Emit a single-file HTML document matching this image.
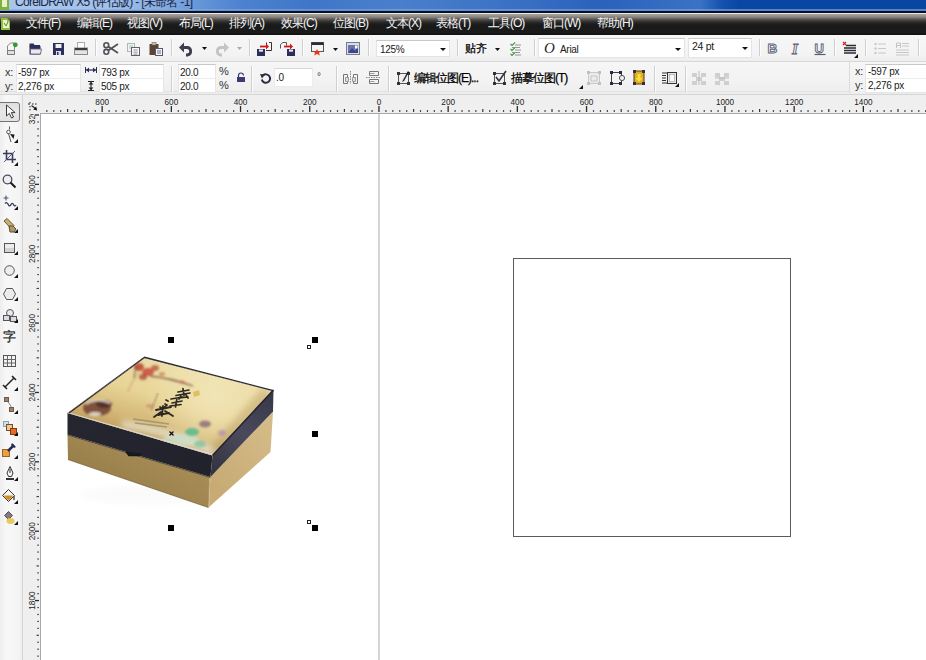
<!DOCTYPE html>
<html><head><meta charset="utf-8"><style>
*{margin:0;padding:0;box-sizing:border-box}
html,body{width:926px;height:660px;overflow:hidden;background:#fff;font-family:"Liberation Sans",sans-serif;}
.a{position:absolute}
#title{left:0;top:0;width:926px;height:11px;background:linear-gradient(90deg,#aac6ea 0px,#a4c0e8 110px,#8aaee0 160px,#6898d8 195px,#4c82d0 240px,#3f76c8 310px,#4a7fcc 400px,#3a70c4 520px,#2a62bc 600px,#3a72c6 700px,#1452ae 722px,#0a46a4 740px,#0846a2 926px);overflow:hidden}
#title .tl{position:absolute;left:0;top:9px;width:926px;height:2px;background:linear-gradient(180deg,rgba(150,190,240,.5),rgba(90,140,210,.9))}
#title .t{position:absolute;left:15px;top:-4px;font-size:12px;line-height:13px;letter-spacing:-0.7px;color:#15284a;white-space:nowrap}
#menu{left:0;top:11px;width:926px;height:24px;background:linear-gradient(180deg,#0a1020 0,#0a1020 2px,#eeeeee 2px,#e6e6e6 3px,#aaa49e 3px,#a29c96 4px,#8a8580 6px,#5e5a56 8px,#3a3836 10px,#242424 12px,#1a1a1a 14px,#1a1a1a 22px,#121212 23px,#121212 24px)}
.mi{position:absolute;top:6px;color:#f4f4f4;font-size:12px;white-space:nowrap;line-height:13px;letter-spacing:-1px}
#tb1{left:0;top:35px;width:926px;height:26px;background:linear-gradient(180deg,#f8f8f8 0,#f6f6f6 2px,#f3f3f3 20px,#ededed 26px)}
#tb1line{left:0;top:61px;width:926px;height:1px;background:#d8d8d8}
#tb2{left:0;top:62px;width:926px;height:33px;background:linear-gradient(180deg,#f6f6f6 0,#f2f2f2 20px,#eeeeee 29px,#ececec 32px,#d6d6d6 32px,#d6d6d6 33px)}
#toolbox{left:0;top:95px;width:22px;height:565px;background:linear-gradient(90deg,#eeeeee 0,#f7f7f7 6px,#f5f5f5 18px,#eeeeee 22px)}
#tbsep{left:22px;top:95px;width:1px;height:565px;background:#d4d4d4}
#canvas{left:41px;top:113px;width:885px;height:547px;background:#fff}
#vline{left:378px;top:114px;width:2px;height:546px;background:#d4d4d4}
#rect{left:513px;top:258px;width:278px;height:279px;border:1px solid #5a5a5a}
.sep{position:absolute;width:2px;border-left:1px solid #cfcfcf;border-right:1px solid #fdfdfd}
.inp{position:absolute;background:#fff;border:1px solid #e4e4e4;border-top-color:#c8c8c8}
.txt{position:absolute;font-size:10px;color:#202020;white-space:nowrap;line-height:11px;letter-spacing:-0.3px}
.cn{position:absolute;font-size:12px;color:#000;white-space:nowrap;line-height:13px;letter-spacing:-1px;-webkit-text-stroke:0.25px #000}
.h{position:absolute;width:6px;height:6px;background:#000}
.ho{position:absolute;width:4px;height:4px;border:1px solid #222;background:#fff}
svg{position:absolute;overflow:visible}
</style></head><body>
<div class="a" id="title"><div class="tl"></div><div class="t">CorelDRAW X5 (评估版) - [未命名 -1]</div><svg style="left:0;top:0" width="10" height="11"><rect x="0" y="-2" width="9" height="12" fill="#7fb238"/><rect x="2" y="-2" width="5" height="9" fill="#e8f0d0"/></svg></div>
<div class="a" id="menu">
<svg style="left:1px;top:6px" width="10" height="14"><path d="M0 1h6l3 3v9H0z" fill="#8cc23c"/><path d="M2 3h4v2h2v6H2z" fill="#eaf4d4"/><path d="M3 6l2 3l2-4" stroke="#5a8a20" stroke-width="1" fill="none"/></svg>
<span class="mi" style="left:26px">文件(F)</span>
<span class="mi" style="left:77px">编辑(E)</span>
<span class="mi" style="left:127px">视图(V)</span>
<span class="mi" style="left:179px">布局(L)</span>
<span class="mi" style="left:229px">排列(A)</span>
<span class="mi" style="left:281px">效果(C)</span>
<span class="mi" style="left:333px">位图(B)</span>
<span class="mi" style="left:386px">文本(X)</span>
<span class="mi" style="left:436px">表格(T)</span>
<span class="mi" style="left:488px">工具(O)</span>
<span class="mi" style="left:542px">窗口(W)</span>
<span class="mi" style="left:597px">帮助(H)</span>
</div>
<div class="a" id="tb1"></div><div class="a" id="tb1line"></div><div class="a" id="tb2"></div><div class="a" style="left:0;top:91px;width:926px;height:1px;background:#e2e2e2"></div>
<div class="sep" style="left:95px;top:39px;height:17px"></div>
<div class="sep" style="left:171px;top:39px;height:17px"></div>
<div class="sep" style="left:249px;top:39px;height:17px"></div>
<div class="sep" style="left:302px;top:39px;height:17px"></div>
<div class="sep" style="left:368px;top:39px;height:17px"></div>
<div class="sep" style="left:457px;top:39px;height:17px"></div>
<div class="sep" style="left:534px;top:39px;height:17px"></div>
<div class="sep" style="left:759px;top:39px;height:17px"></div>
<div class="sep" style="left:834px;top:39px;height:17px"></div>
<div class="sep" style="left:865px;top:39px;height:17px"></div>
<div class="sep" style="left:918px;top:39px;height:17px"></div>
<div class="sep" style="left:171px;top:66px;height:26px"></div>
<div class="sep" style="left:251px;top:66px;height:26px"></div>
<div class="sep" style="left:336px;top:66px;height:26px"></div>
<div class="sep" style="left:388px;top:66px;height:26px"></div>
<div class="sep" style="left:654px;top:66px;height:26px"></div>
<div class="sep" style="left:685px;top:66px;height:26px"></div>
<svg style="left:6px;top:41px" width="12" height="14" viewBox="0 0 12 14"><path d="M1.5 5L4.5 2H8.5V13.5H1.5Z" fill="#f6f6f6" stroke="#8a8a8a"/><path d="M1.5 9.5h7v4h-7z" fill="#e0e0e0" stroke="#7a7a7a"/><circle cx="9.3" cy="3.8" r="2.4" fill="#2f9a2f"/></svg>
<svg style="left:29px;top:43px" width="13" height="12" viewBox="0 0 13 12"><path d="M0.5 0.5h4l1 1.5h5.5v2H0.5z" fill="#2c2f5a"/><path d="M0.5 3h11v8.5H0.5z" fill="#2c2f5a"/><path d="M1.5 6h11l-1 5H1.5z" fill="#e8e8ee" stroke="#5a5a7a" stroke-width="0.8"/></svg>
<svg style="left:53px;top:43px" width="11" height="12" viewBox="0 0 11 12"><rect x="0" y="0" width="11" height="12" fill="#2c2f5a"/><rect x="2.5" y="1" width="6" height="4" fill="#f0f0f0"/><rect x="3" y="8" width="5" height="4" fill="#dde"/><rect x="4" y="9" width="1.5" height="3" fill="#2c2f5a"/></svg>
<svg style="left:74px;top:42px" width="14" height="13" viewBox="0 0 14 13"><rect x="3.5" y="0.5" width="7" height="6" fill="#fff" stroke="#aaa"/><rect x="0.5" y="6" width="13" height="6.5" fill="#e4e4e4" stroke="#8a8a8a"/><rect x="1" y="6" width="12" height="2.2" fill="#3a3a44"/></svg>
<svg style="left:103px;top:42px" width="16" height="13" viewBox="0 0 16 13"><circle cx="3.3" cy="3.2" r="2.4" fill="none" stroke="#505058" stroke-width="1.6"/><circle cx="3.3" cy="9.8" r="2.4" fill="none" stroke="#505058" stroke-width="1.6"/><path d="M5.2 4.5L15 11M5.2 8.5L15 2" stroke="#505058" stroke-width="1.7"/></svg>
<svg style="left:127px;top:43px" width="13" height="13" viewBox="0 0 13 13"><rect x="0.5" y="0.5" width="7" height="8" fill="#f0f4f4" stroke="#a8b8b8"/><path d="M2 3h4M2 5h4" stroke="#9ab8b0" stroke-width="0.8"/><rect x="4.5" y="4.5" width="8" height="8" fill="#f8f8f8" stroke="#606068"/><path d="M6.5 7h4M6.5 9.2h4M6.5 11.2h4" stroke="#7a7a84" stroke-width="0.8"/></svg>
<svg style="left:149px;top:42px" width="14" height="14" viewBox="0 0 14 14"><rect x="0.5" y="2" width="9" height="11" fill="#5a4630"/><rect x="3" y="0.5" width="4" height="2.5" fill="#c8c8c8" stroke="#666" stroke-width="0.6"/><rect x="6.5" y="6.5" width="7" height="7" fill="#f4f4f8" stroke="#555a66"/><path d="M8 9h4M8 11h4" stroke="#6a7090"/></svg>
<svg style="left:179px;top:42px" width="14" height="13" viewBox="0 0 14 13"><path d="M2 5.5h6.5a3.8 3.8 0 0 1 0 7.5H7" fill="none" stroke="#3c3e4e" stroke-width="2.8"/><path d="M0 5.5L5 0.5V10.5Z" fill="#3c3e4e"/></svg>
<svg style="left:202px;top:47px" width="5" height="3" viewBox="0 0 5 3"><path d="M0 0h5l-2.5 3z" fill="#111"/></svg>
<svg style="left:215px;top:42px" width="14" height="13" viewBox="0 0 14 13"><path d="M12 5.5H5.5a3.8 3.8 0 0 0 0 7.5H7" fill="none" stroke="#c4c4c8" stroke-width="2.8"/><path d="M14 5.5L9 0.5V10.5Z" fill="#c4c4c8"/></svg>
<svg style="left:237px;top:47px" width="5" height="3" viewBox="0 0 5 3"><path d="M0 0h5l-2.5 3z" fill="#aaa"/></svg>
<svg style="left:257px;top:42px" width="15" height="14" viewBox="0 0 15 14"><path d="M9.5 3.5V0.5M12 0.5h2.5v8H9" fill="none" stroke="#333"/><path d="M3 4.5h7" stroke="#d01818" stroke-width="1.8"/><path d="M9 1.5l3 3-3 3z" fill="#d01818"/><rect x="0" y="7" width="8" height="7" fill="#2c2f5a"/><rect x="2" y="7.5" width="4" height="2.2" fill="#e8e8f0"/></svg>
<svg style="left:280px;top:42px" width="15" height="14" viewBox="0 0 15 14"><path d="M0.5 6.5V2.5L3 0.5h3.5v3" fill="#fafafa" stroke="#555"/><path d="M4 4.5h7" stroke="#d01818" stroke-width="1.8"/><path d="M10 1.5l3 3-3 3z" fill="#d01818"/><rect x="7" y="7" width="8" height="7" fill="#2c2f5a"/><rect x="9" y="7.5" width="4" height="2.2" fill="#e8e8f0"/></svg>
<svg style="left:311px;top:42px" width="13" height="13" viewBox="0 0 13 13"><rect x="0.5" y="0.5" width="12" height="9" fill="#f4f4f4" stroke="#555"/><rect x="0.5" y="0.5" width="12" height="2.5" fill="#2a2a3a"/><path d="M6 7l1.3 2.5L10 9 8 11l1 2.5-3-1.5-3 1.5 1-2.5-2-2 2.7.5z" fill="#e83a1a"/></svg>
<svg style="left:333px;top:48px" width="5" height="3" viewBox="0 0 5 3"><path d="M0 0h5l-2.5 3z" fill="#111"/></svg>
<svg style="left:346px;top:42px" width="14" height="13" viewBox="0 0 14 13"><rect x="0.5" y="0.5" width="13" height="12" fill="#dcdce4" stroke="#7a7a8a"/><rect x="2" y="3" width="10" height="8" fill="#6a74b0"/><path d="M2 11l4-5 3 3 3-4v6z" fill="#3a4488"/><rect x="9" y="3.5" width="2.5" height="3" fill="#fff"/></svg>
<div class="inp" style="left:376px;top:40px;width:74px;height:17px"></div>
<div class="txt" style="left:380px;top:44px">125%</div>
<svg style="left:440px;top:48px" width="6" height="3" viewBox="0 0 6 3"><path d="M0 0h6l-3 3z" fill="#111"/></svg>
<div class="cn" style="left:465px;top:42px;font-size:11px;letter-spacing:-0.5px">贴齐</div>
<svg style="left:495px;top:48px" width="5" height="3" viewBox="0 0 5 3"><path d="M0 0h5l-2.5 3z" fill="#111"/></svg>
<svg style="left:510px;top:42px" width="11" height="14" viewBox="0 0 11 14"><path d="M0.5 2l1.5 1.5 3-3M0.5 7l1.5 1.5 3-3M0.5 12l1.5 1.5 3-3" fill="none" stroke="#3a9a3a" stroke-width="1.1"/><path d="M5 3h6M5 8h6M5 13h6M2 5.5h8M2 10.5h8" stroke="#8a8a8a" stroke-width="0.9"/></svg>
<div class="inp" style="left:538px;top:38px;width:147px;height:20px"></div>
<div class="a" style="left:544px;top:41px;font-family:'Liberation Serif',serif;font-style:italic;font-weight:normal;font-size:15px;line-height:15px;color:#1a2a2a">O</div>
<div class="txt" style="left:560px;top:44px;font-size:10px">Arial</div>
<svg style="left:675px;top:48px" width="6" height="3" viewBox="0 0 6 3"><path d="M0 0h6l-3 3z" fill="#111"/></svg>
<div class="inp" style="left:688px;top:38px;width:64px;height:20px"></div>
<div class="txt" style="left:692px;top:41px;font-size:10.5px">24 pt</div>
<svg style="left:742px;top:47px" width="6" height="3" viewBox="0 0 6 3"><path d="M0 0h6l-3 3z" fill="#111"/></svg>
<svg style="left:766px;top:41px" width="14" height="14" viewBox="0 0 14 14"><text x="1.5" y="12.3" font-family="Liberation Sans" font-weight="bold" font-size="13.5" fill="#fafafa" stroke="#5a5d72" stroke-width="0.9">B</text></svg>
<svg style="left:789px;top:41px" width="14" height="14" viewBox="0 0 14 14"><text x="3" y="12.5" font-family="Liberation Serif" font-style="italic" font-weight="bold" font-size="15" fill="#fafafa" stroke="#5a5d72" stroke-width="0.9">I</text></svg>
<svg style="left:813px;top:41px" width="14" height="15" viewBox="0 0 14 15"><text x="1.5" y="11.5" font-family="Liberation Sans" font-weight="bold" font-size="13" fill="#fafafa" stroke="#5a5d72" stroke-width="0.9">U</text><path d="M1.5 13.5h11" stroke="#5a5d72" stroke-width="1.2"/></svg>
<svg style="left:842px;top:41px" width="17" height="17" viewBox="0 0 17 17"><path d="M1 1l3 3M4 1l-3 3" stroke="#d82020" stroke-width="1.2"/><path d="M4 4.5h10M2 7h12M2 9.5h12M2 12h12" stroke="#2a2a34" stroke-width="1.3"/><path d="M16 13v4h-4z" fill="#111"/></svg>
<svg style="left:874px;top:42px" width="12" height="13" viewBox="0 0 12 13"><circle cx="1.5" cy="2" r="1.2" fill="#c8c8c8"/><circle cx="1.5" cy="6.5" r="1.2" fill="#c8c8c8"/><circle cx="1.5" cy="11" r="1.2" fill="#c8c8c8"/><path d="M4 2h8M4 6.5h8M4 11h8" stroke="#c8c8c8" stroke-width="1.2"/></svg>
<svg style="left:896px;top:42px" width="13" height="13" viewBox="0 0 13 13"><path d="M0.5 6V1h4v5M0.5 3.5h4" stroke="#c4c4c4" fill="none"/><path d="M6 1.5h7M6 4h7M0 8h13M0 10.5h13M0 13h13" stroke="#c8c8c8" stroke-width="1.1"/></svg>
<div class="txt" style="left:5px;top:67px;font-size:11px;color:#333">x:</div>
<div class="txt" style="left:5px;top:81px;font-size:11px;color:#333">y:</div>
<div class="inp" style="left:16px;top:64px;width:65px;height:29px;border-color:#e6e6e6;border-top-color:#c8c8c8"></div>
<div class="a" style="left:17px;top:78px;width:63px;height:1px;background:#ececec"></div>
<div class="txt" style="left:18px;top:67px">-597 px</div>
<div class="txt" style="left:18px;top:81px">2,276 px</div>
<svg style="left:85px;top:67px" width="12" height="6" viewBox="0 0 12 6"><path d="M0.5 0v6M11.5 0v6" stroke="#2c2f5a"/><path d="M1 3h10" stroke="#2c2f5a" stroke-width="1.2"/><path d="M1 3l3-2.5v5zM11 3l-3-2.5v5z" fill="#2c2f5a"/></svg>
<svg style="left:88px;top:81px" width="6" height="10" viewBox="0 0 6 10"><path d="M0 0.5h6M0 9.5h6" stroke="#222"/><path d="M3 1v8" stroke="#222" stroke-width="1.1"/><path d="M3 1L0.5 3.5h5zM3 9L0.5 6.5h5z" fill="#222"/></svg>
<div class="inp" style="left:99px;top:64px;width:65px;height:29px;border-color:#e6e6e6;border-top-color:#c8c8c8"></div>
<div class="a" style="left:100px;top:78px;width:63px;height:1px;background:#ececec"></div>
<div class="txt" style="left:101px;top:67px">793 px</div>
<div class="txt" style="left:101px;top:81px">505 px</div>
<div class="inp" style="left:178px;top:64px;width:38px;height:29px;border-color:#e6e6e6;border-top-color:#c8c8c8"></div>
<div class="a" style="left:179px;top:78px;width:36px;height:1px;background:#ececec"></div>
<div class="txt" style="left:180px;top:67px">20.0</div>
<div class="txt" style="left:180px;top:81px">20.0</div>
<div class="txt" style="left:219px;top:66px;font-size:11px;color:#333">%</div>
<div class="txt" style="left:219px;top:80px;font-size:11px;color:#333">%</div>
<svg style="left:237px;top:73px" width="8" height="9" viewBox="0 0 8 9"><path d="M1.5 4V2.5a2.5 2.5 0 0 1 5 0" fill="none" stroke="#3a3a6a" stroke-width="1.2"/><rect x="0" y="4" width="8" height="5" fill="#3a3a7a"/></svg>
<svg style="left:260px;top:73px" width="11" height="11" viewBox="0 0 11 11"><path d="M3 2.5A4.2 4.2 0 1 1 1.8 6.5" fill="none" stroke="#2a2c44" stroke-width="2"/><path d="M0 1l5 0.5-3 4z" fill="#2a2c44"/></svg>
<div class="inp" style="left:274px;top:68px;width:39px;height:19px;border-color:#ececec;border-top-color:#d8d8d8"></div>
<div class="txt" style="left:276px;top:72px">.0</div>
<div class="txt" style="left:317px;top:71px;font-size:10px;color:#444">°</div>
<svg style="left:343px;top:71px" width="15" height="13" viewBox="0 0 15 13"><path d="M7.5 0v13" stroke="#888" stroke-dasharray="1.5 1"/><path d="M0.5 3.5h4v9h-4zM10.5 3.5h4v9h-4z" fill="#f4f4f4" stroke="#777"/><path d="M2.5 6.5h3v4h-3zM9.5 6.5h3v4h-3z" fill="#ddd" stroke="#888" stroke-width="0.8"/></svg>
<svg style="left:366px;top:71px" width="15" height="13" viewBox="0 0 15 13"><path d="M0 6.5h15" stroke="#888" stroke-dasharray="1.5 1"/><path d="M3.5 0.5h9v4h-9zM3.5 8.5h9v4h-9z" fill="#f4f4f4" stroke="#777"/><path d="M3.5 2.5h5M3.5 10.5h5" stroke="#888" stroke-width="0.8"/></svg>
<svg style="left:397px;top:71px" width="13" height="14" viewBox="0 0 13 14"><rect x="1.5" y="2.5" width="10" height="10" fill="#f0f0f4" stroke="#555"/><path d="M0 1h3v3H0zM10 1h3v3h-3zM0 11h3v3H0zM10 11h3v3h-3z" fill="#333"/><path d="M11 0L6 9l-1 2 2-1 5-9z" fill="#222"/></svg>
<div class="cn" style="left:414px;top:72px">编辑位图(E)...</div>
<svg style="left:493px;top:71px" width="13" height="14" viewBox="0 0 13 14"><rect x="1.5" y="2.5" width="10" height="10" fill="#f0f0f4" stroke="#555"/><path d="M0 1h3v3H0zM0 11h3v3H0zM10 11h3v3h-3z" fill="#333"/><path d="M3 6l3 4 7-10" fill="none" stroke="#333" stroke-width="1.6"/></svg>
<div class="cn" style="left:511px;top:72px">描摹位图(T)</div>
<svg style="left:579px;top:85px" width="4" height="4" viewBox="0 0 4 4"><path d="M4 0v4H0z" fill="#111"/></svg>
<svg style="left:587px;top:71px" width="14" height="14" viewBox="0 0 14 14"><rect x="1.5" y="1.5" width="11" height="11" fill="#ececec" stroke="#c8c8c8"/><path d="M0 0h3v3H0zM11 0h3v3h-3zM0 11h3v3H0zM11 11h3v3h-3z" fill="#c0c0c0"/><path d="M4 5h6v5H4z" fill="none" stroke="#c4c4c4"/></svg>
<svg style="left:610px;top:71px" width="15" height="14" viewBox="0 0 15 14"><rect x="1.5" y="1.5" width="10" height="11" fill="#f4f4f4" stroke="#444"/><path d="M0 0h3v3H0zM9 0h3v3H9zM0 11h3v3H0zM9 11h3v3H9z" fill="#2a2a3a"/><circle cx="12" cy="7" r="2.6" fill="#eee" stroke="#555"/></svg>
<svg style="left:633px;top:70px" width="12" height="15" viewBox="0 0 12 15"><rect x="1" y="1" width="10" height="13" fill="#e0b020" stroke="#5a3a20"/><path d="M0 0h3v3H0zM9 0h3v3H9zM0 12h3v3H0zM9 12h3v3H9z" fill="#3a2a3a"/><path d="M4.5 4h3v4h2l-3.5 4-3.5-4h2z" fill="#f8e040"/></svg>
<svg style="left:662px;top:71px" width="17" height="16" viewBox="0 0 17 16"><path d="M0 2h5M0 4.5h4M0 7h4M0 9.5h4M0 12h5" stroke="#333" stroke-width="1"/><rect x="5.5" y="1.5" width="9" height="11" fill="#e8e8ec" stroke="#333"/><rect x="7.5" y="3.5" width="5" height="7" fill="#fafafa" stroke="#999" stroke-width="0.6"/><path d="M17 12v4h-4z" fill="#111"/></svg>
<svg style="left:692px;top:71px" width="15" height="14" viewBox="0 0 15 14"><g fill="#cfcfcf"><rect x="0" y="2" width="5" height="4"/><rect x="9" y="2" width="5" height="4"/><rect x="4" y="6" width="6" height="4"/><rect x="0" y="10" width="5" height="4"/><rect x="9" y="10" width="5" height="4"/></g><path d="M7 0v14" stroke="#bbb"/></svg>
<svg style="left:715px;top:71px" width="15" height="14" viewBox="0 0 15 14"><g fill="#cfcfcf"><rect x="0" y="2" width="5" height="4"/><rect x="9" y="2" width="5" height="4"/><rect x="4" y="6" width="6" height="4"/><rect x="0" y="10" width="5" height="4"/><rect x="9" y="10" width="5" height="4"/></g><path d="M0 7h14" stroke="#bbb"/></svg>
<div class="a" style="left:849px;top:62px;width:77px;height:31px;background:linear-gradient(180deg,#f6f6f6,#f0f0f0);border-left:1px solid #dcdcdc"></div>
<div class="txt" style="left:855px;top:66px;font-size:11px;color:#333">x:</div>
<div class="txt" style="left:855px;top:80px;font-size:11px;color:#333">y:</div>
<div class="inp" style="left:865px;top:64px;width:70px;height:29px;border-color:#e6e6e6;border-top-color:#c8c8c8"></div>
<div class="a" style="left:866px;top:78px;width:60px;height:1px;background:#ececec"></div>
<div class="txt" style="left:868px;top:66px">-597 px</div>
<div class="txt" style="left:868px;top:80px">2,276 px</div>
<div class="a" id="toolbox"></div><div class="a" id="tbsep"></div>
<div class="a" style="left:-3px;top:102px;width:23px;height:20px;border:1px solid #747474;border-radius:3px;background:linear-gradient(180deg,#dedede,#e8e8e8 50%,#e2e2e2)"></div>
<svg style="left:5px;top:104px" width="10" height="15" viewBox="0 0 10 15"><path d="M1.5 1v11l2.8-2.6 2.2 4.6 2-1-2.2-4.4h3.8z" fill="#fafafa" stroke="#3a3a3a" stroke-width="1"/></svg>
<svg style="left:3px;top:126px" width="12" height="16" viewBox="0 0 12 16"><path d="M6.5 0.5v3M5 6l3 10" stroke="#555" stroke-width="1"/><circle cx="5.5" cy="6" r="1.8" fill="#fff" stroke="#555"/><path d="M7 8l4.5 0.5-1 4.5z" fill="#1a1a2a"/></svg>
<svg style="left:14px;top:139px" width="4" height="4" viewBox="0 0 4 4"><path d="M4 0v4H0z" fill="#111"/></svg>
<svg style="left:3px;top:150px" width="13" height="13" viewBox="0 0 13 13"><path d="M3.5 0v9.5h9.5M0 3.5h9.5V13" fill="none" stroke="#3c3c5c" stroke-width="1.6"/><path d="M1 12L12 1" stroke="#5a5a7a" stroke-width="1"/></svg>
<svg style="left:14px;top:162px" width="4" height="4" viewBox="0 0 4 4"><path d="M4 0v4H0z" fill="#111"/></svg>
<svg style="left:2px;top:174px" width="15" height="14" viewBox="0 0 15 14"><circle cx="5.5" cy="5.5" r="4.3" fill="#eceef4" stroke="#4a4a5a" stroke-width="1.3"/><path d="M8.5 8.5l5 5" stroke="#1a1a1a" stroke-width="2"/></svg>
<svg style="left:2px;top:195px" width="15" height="14" viewBox="0 0 15 14"><path d="M4 0.5v5M1.5 3h5" stroke="#50527a" stroke-width="1.1"/><path d="M3 8.5c1.5-2 3 0 3.5 1.5s2 1 2.5-0.5 2-1.5 2.5 0 1.5 2 2.5 0.5" fill="none" stroke="#3a3c5c" stroke-width="1.3"/></svg>
<svg style="left:14px;top:206px" width="4" height="4" viewBox="0 0 4 4"><path d="M4 0v4H0z" fill="#111"/></svg>
<svg style="left:3px;top:218px" width="14" height="14" viewBox="0 0 14 14"><path d="M1 3l3-2.5 7 7-3 3z" fill="#c8b070" stroke="#6a5a2a" stroke-width="1"/><path d="M6 8l4 0 3 3-2 3H7z" fill="#b09860" stroke="#5a4a3a" stroke-width="1"/></svg>
<svg style="left:14px;top:229px" width="4" height="4" viewBox="0 0 4 4"><path d="M4 0v4H0z" fill="#111"/></svg>
<svg style="left:4px;top:243px" width="11" height="10" viewBox="0 0 11 10"><rect x="0.5" y="0.5" width="10" height="9" fill="#ececec" stroke="#555"/><rect x="1" y="5" width="9" height="4" fill="#d4d4d4"/></svg>
<svg style="left:14px;top:251px" width="4" height="4" viewBox="0 0 4 4"><path d="M4 0v4H0z" fill="#111"/></svg>
<svg style="left:4px;top:265px" width="11" height="11" viewBox="0 0 11 11"><circle cx="5.5" cy="5.5" r="4.8" fill="#eeeeee" stroke="#555" stroke-width="1"/></svg>
<svg style="left:14px;top:274px" width="4" height="4" viewBox="0 0 4 4"><path d="M4 0v4H0z" fill="#111"/></svg>
<svg style="left:3px;top:288px" width="13" height="12" viewBox="0 0 13 12"><path d="M3.5 0.5h6L12.5 6l-3 5.5h-6L0.5 6z" fill="#ececec" stroke="#555"/></svg>
<svg style="left:14px;top:297px" width="4" height="4" viewBox="0 0 4 4"><path d="M4 0v4H0z" fill="#111"/></svg>
<svg style="left:3px;top:309px" width="14" height="13" viewBox="0 0 14 13"><circle cx="7" cy="4" r="3.5" fill="#e8e8ee" stroke="#555"/><rect x="0.5" y="6.5" width="6" height="5" fill="#dcdce4" stroke="#555"/><rect x="7.5" y="7.5" width="6" height="5" fill="#dcdce4" stroke="#555"/></svg>
<svg style="left:14px;top:319px" width="4" height="4" viewBox="0 0 4 4"><path d="M4 0v4H0z" fill="#111"/></svg>
<div class="cn" style="left:3px;top:330px;font-size:13px;line-height:14px;color:#333;letter-spacing:0">字</div>
<svg style="left:3px;top:355px" width="13" height="12" viewBox="0 0 13 12"><rect x="0.5" y="0.5" width="12" height="11" fill="#f4f4f4" stroke="#555"/><path d="M4.5 0.5v11M8.5 0.5v11M0.5 4.5h12M0.5 8h12" stroke="#666" stroke-width="1"/></svg>
<svg style="left:3px;top:376px" width="13" height="13" viewBox="0 0 13 13"><path d="M2 11L11 2" stroke="#222" stroke-width="1.4"/><path d="M0 9l4 4M9 0l4 4" stroke="#222" stroke-width="1.6"/></svg>
<svg style="left:14px;top:387px" width="4" height="4" viewBox="0 0 4 4"><path d="M4 0v4H0z" fill="#111"/></svg>
<svg style="left:4px;top:397px" width="11" height="15" viewBox="0 0 11 15"><path d="M3 3l5 8" stroke="#888"/><rect x="0.5" y="0.5" width="4" height="4" fill="#a08060" stroke="#6a5a4a"/><rect x="5.5" y="10.5" width="4" height="4" fill="#a08060" stroke="#6a5a4a"/></svg>
<svg style="left:14px;top:410px" width="4" height="4" viewBox="0 0 4 4"><path d="M4 0v4H0z" fill="#111"/></svg>
<svg style="left:3px;top:421px" width="14" height="15" viewBox="0 0 14 15"><rect x="0.5" y="0.5" width="5" height="5" fill="#cfe0f0" stroke="#8aa0b8"/><rect x="3.5" y="3.5" width="6" height="6" fill="#f0c890" stroke="#6a5030"/><rect x="7.5" y="7.5" width="6" height="6" fill="#e86a20" stroke="#8a3a10"/></svg>
<svg style="left:14px;top:432px" width="4" height="4" viewBox="0 0 4 4"><path d="M4 0v4H0z" fill="#111"/></svg>
<svg style="left:2px;top:443px" width="14" height="14" viewBox="0 0 14 14"><rect x="0.5" y="6.5" width="7" height="7" fill="#e8a040" stroke="#a06020"/><path d="M6 8l6-6" stroke="#2a2a5a" stroke-width="2.5"/><path d="M10 0l4 4-2 1-3-3z" fill="#2a2a5a"/></svg>
<svg style="left:14px;top:455px" width="4" height="4" viewBox="0 0 4 4"><path d="M4 0v4H0z" fill="#111"/></svg>
<svg style="left:6px;top:466px" width="8" height="14" viewBox="0 0 8 14"><path d="M4 0.5L7 7 5.5 10.5h-3L1 7z" fill="#f8f8f8" stroke="#333"/><path d="M4 3v4" stroke="#333"/><rect x="0" y="12" width="8" height="2" fill="#333"/></svg>
<svg style="left:14px;top:477px" width="4" height="4" viewBox="0 0 4 4"><path d="M4 0v4H0z" fill="#111"/></svg>
<svg style="left:2px;top:489px" width="14" height="13" viewBox="0 0 14 13"><path d="M6.5 0.5l6 6-6 6-6-6z" fill="#f4f4f4" stroke="#333"/><path d="M1.5 6.5h10l-5 5z" fill="#d88a18"/><path d="M12 7v4" stroke="#555" stroke-width="1.5"/></svg>
<svg style="left:14px;top:500px" width="4" height="4" viewBox="0 0 4 4"><path d="M4 0v4H0z" fill="#111"/></svg>
<svg style="left:4px;top:511px" width="11" height="14" viewBox="0 0 11 14"><path d="M4.5 0.5l4 4-4 4-4-4z" fill="#8a7a7a" stroke="#5a4a6a"/><ellipse cx="6.5" cy="10" rx="4" ry="3" fill="#e8c860"/></svg>
<svg style="left:14px;top:521px" width="4" height="4" viewBox="0 0 4 4"><path d="M4 0v4H0z" fill="#111"/></svg>
<svg style="left:23px;top:95px;overflow:hidden" width="903" height="19" viewBox="23 95 903 19">
<rect x="23" y="95" width="903" height="19" fill="#efefef"/><rect x="40" y="113" width="886" height="1" fill="#a8a8a8"/>
<rect x="46.24" y="110" width="1.2" height="2" fill="#4a4a4a"/><rect x="53.16" y="110" width="1.2" height="2" fill="#4a4a4a"/><rect x="60.08" y="110" width="1.2" height="2" fill="#4a4a4a"/><rect x="67.00" y="109" width="1.2" height="3" fill="#333"/><rect x="73.92" y="110" width="1.2" height="2" fill="#4a4a4a"/><rect x="80.84" y="110" width="1.2" height="2" fill="#4a4a4a"/><rect x="87.76" y="110" width="1.2" height="2" fill="#4a4a4a"/><rect x="94.68" y="110" width="1.2" height="2" fill="#4a4a4a"/><rect x="101.50" y="106" width="1.3" height="6" fill="#2a2a2a"/><text x="102.20" y="104.8" text-anchor="middle" font-size="8.2" fill="#222" font-family="Liberation Sans" >800</text><rect x="108.52" y="110" width="1.2" height="2" fill="#4a4a4a"/><rect x="115.44" y="110" width="1.2" height="2" fill="#4a4a4a"/><rect x="122.36" y="110" width="1.2" height="2" fill="#4a4a4a"/><rect x="129.28" y="110" width="1.2" height="2" fill="#4a4a4a"/><rect x="136.20" y="109" width="1.2" height="3" fill="#333"/><rect x="143.12" y="110" width="1.2" height="2" fill="#4a4a4a"/><rect x="150.04" y="110" width="1.2" height="2" fill="#4a4a4a"/><rect x="156.96" y="110" width="1.2" height="2" fill="#4a4a4a"/><rect x="163.88" y="110" width="1.2" height="2" fill="#4a4a4a"/><rect x="170.70" y="106" width="1.3" height="6" fill="#2a2a2a"/><text x="171.40" y="104.8" text-anchor="middle" font-size="8.2" fill="#222" font-family="Liberation Sans" >600</text><rect x="177.72" y="110" width="1.2" height="2" fill="#4a4a4a"/><rect x="184.64" y="110" width="1.2" height="2" fill="#4a4a4a"/><rect x="191.56" y="110" width="1.2" height="2" fill="#4a4a4a"/><rect x="198.48" y="110" width="1.2" height="2" fill="#4a4a4a"/><rect x="205.40" y="109" width="1.2" height="3" fill="#333"/><rect x="212.32" y="110" width="1.2" height="2" fill="#4a4a4a"/><rect x="219.24" y="110" width="1.2" height="2" fill="#4a4a4a"/><rect x="226.16" y="110" width="1.2" height="2" fill="#4a4a4a"/><rect x="233.08" y="110" width="1.2" height="2" fill="#4a4a4a"/><rect x="239.90" y="106" width="1.3" height="6" fill="#2a2a2a"/><text x="240.60" y="104.8" text-anchor="middle" font-size="8.2" fill="#222" font-family="Liberation Sans" >400</text><rect x="246.92" y="110" width="1.2" height="2" fill="#4a4a4a"/><rect x="253.84" y="110" width="1.2" height="2" fill="#4a4a4a"/><rect x="260.76" y="110" width="1.2" height="2" fill="#4a4a4a"/><rect x="267.68" y="110" width="1.2" height="2" fill="#4a4a4a"/><rect x="274.60" y="109" width="1.2" height="3" fill="#333"/><rect x="281.52" y="110" width="1.2" height="2" fill="#4a4a4a"/><rect x="288.44" y="110" width="1.2" height="2" fill="#4a4a4a"/><rect x="295.36" y="110" width="1.2" height="2" fill="#4a4a4a"/><rect x="302.28" y="110" width="1.2" height="2" fill="#4a4a4a"/><rect x="309.10" y="106" width="1.3" height="6" fill="#2a2a2a"/><text x="309.80" y="104.8" text-anchor="middle" font-size="8.2" fill="#222" font-family="Liberation Sans" >200</text><rect x="316.12" y="110" width="1.2" height="2" fill="#4a4a4a"/><rect x="323.04" y="110" width="1.2" height="2" fill="#4a4a4a"/><rect x="329.96" y="110" width="1.2" height="2" fill="#4a4a4a"/><rect x="336.88" y="110" width="1.2" height="2" fill="#4a4a4a"/><rect x="343.80" y="109" width="1.2" height="3" fill="#333"/><rect x="350.72" y="110" width="1.2" height="2" fill="#4a4a4a"/><rect x="357.64" y="110" width="1.2" height="2" fill="#4a4a4a"/><rect x="364.56" y="110" width="1.2" height="2" fill="#4a4a4a"/><rect x="371.48" y="110" width="1.2" height="2" fill="#4a4a4a"/><rect x="378.30" y="106" width="1.3" height="6" fill="#2a2a2a"/><text x="379.00" y="104.8" text-anchor="middle" font-size="8.2" fill="#222" font-family="Liberation Sans" >0</text><rect x="385.32" y="110" width="1.2" height="2" fill="#4a4a4a"/><rect x="392.24" y="110" width="1.2" height="2" fill="#4a4a4a"/><rect x="399.16" y="110" width="1.2" height="2" fill="#4a4a4a"/><rect x="406.08" y="110" width="1.2" height="2" fill="#4a4a4a"/><rect x="413.00" y="109" width="1.2" height="3" fill="#333"/><rect x="419.92" y="110" width="1.2" height="2" fill="#4a4a4a"/><rect x="426.84" y="110" width="1.2" height="2" fill="#4a4a4a"/><rect x="433.76" y="110" width="1.2" height="2" fill="#4a4a4a"/><rect x="440.68" y="110" width="1.2" height="2" fill="#4a4a4a"/><rect x="447.50" y="106" width="1.3" height="6" fill="#2a2a2a"/><text x="448.20" y="104.8" text-anchor="middle" font-size="8.2" fill="#222" font-family="Liberation Sans" >200</text><rect x="454.52" y="110" width="1.2" height="2" fill="#4a4a4a"/><rect x="461.44" y="110" width="1.2" height="2" fill="#4a4a4a"/><rect x="468.36" y="110" width="1.2" height="2" fill="#4a4a4a"/><rect x="475.28" y="110" width="1.2" height="2" fill="#4a4a4a"/><rect x="482.20" y="109" width="1.2" height="3" fill="#333"/><rect x="489.12" y="110" width="1.2" height="2" fill="#4a4a4a"/><rect x="496.04" y="110" width="1.2" height="2" fill="#4a4a4a"/><rect x="502.96" y="110" width="1.2" height="2" fill="#4a4a4a"/><rect x="509.88" y="110" width="1.2" height="2" fill="#4a4a4a"/><rect x="516.70" y="106" width="1.3" height="6" fill="#2a2a2a"/><text x="517.40" y="104.8" text-anchor="middle" font-size="8.2" fill="#222" font-family="Liberation Sans" >400</text><rect x="523.72" y="110" width="1.2" height="2" fill="#4a4a4a"/><rect x="530.64" y="110" width="1.2" height="2" fill="#4a4a4a"/><rect x="537.56" y="110" width="1.2" height="2" fill="#4a4a4a"/><rect x="544.48" y="110" width="1.2" height="2" fill="#4a4a4a"/><rect x="551.40" y="109" width="1.2" height="3" fill="#333"/><rect x="558.32" y="110" width="1.2" height="2" fill="#4a4a4a"/><rect x="565.24" y="110" width="1.2" height="2" fill="#4a4a4a"/><rect x="572.16" y="110" width="1.2" height="2" fill="#4a4a4a"/><rect x="579.08" y="110" width="1.2" height="2" fill="#4a4a4a"/><rect x="585.90" y="106" width="1.3" height="6" fill="#2a2a2a"/><text x="586.60" y="104.8" text-anchor="middle" font-size="8.2" fill="#222" font-family="Liberation Sans" >600</text><rect x="592.92" y="110" width="1.2" height="2" fill="#4a4a4a"/><rect x="599.84" y="110" width="1.2" height="2" fill="#4a4a4a"/><rect x="606.76" y="110" width="1.2" height="2" fill="#4a4a4a"/><rect x="613.68" y="110" width="1.2" height="2" fill="#4a4a4a"/><rect x="620.60" y="109" width="1.2" height="3" fill="#333"/><rect x="627.52" y="110" width="1.2" height="2" fill="#4a4a4a"/><rect x="634.44" y="110" width="1.2" height="2" fill="#4a4a4a"/><rect x="641.36" y="110" width="1.2" height="2" fill="#4a4a4a"/><rect x="648.28" y="110" width="1.2" height="2" fill="#4a4a4a"/><rect x="655.10" y="106" width="1.3" height="6" fill="#2a2a2a"/><text x="655.80" y="104.8" text-anchor="middle" font-size="8.2" fill="#222" font-family="Liberation Sans" >800</text><rect x="662.12" y="110" width="1.2" height="2" fill="#4a4a4a"/><rect x="669.04" y="110" width="1.2" height="2" fill="#4a4a4a"/><rect x="675.96" y="110" width="1.2" height="2" fill="#4a4a4a"/><rect x="682.88" y="110" width="1.2" height="2" fill="#4a4a4a"/><rect x="689.80" y="109" width="1.2" height="3" fill="#333"/><rect x="696.72" y="110" width="1.2" height="2" fill="#4a4a4a"/><rect x="703.64" y="110" width="1.2" height="2" fill="#4a4a4a"/><rect x="710.56" y="110" width="1.2" height="2" fill="#4a4a4a"/><rect x="717.48" y="110" width="1.2" height="2" fill="#4a4a4a"/><rect x="724.30" y="106" width="1.3" height="6" fill="#2a2a2a"/><text x="725.00" y="104.8" text-anchor="middle" font-size="8.2" fill="#222" font-family="Liberation Sans" >1000</text><rect x="731.32" y="110" width="1.2" height="2" fill="#4a4a4a"/><rect x="738.24" y="110" width="1.2" height="2" fill="#4a4a4a"/><rect x="745.16" y="110" width="1.2" height="2" fill="#4a4a4a"/><rect x="752.08" y="110" width="1.2" height="2" fill="#4a4a4a"/><rect x="759.00" y="109" width="1.2" height="3" fill="#333"/><rect x="765.92" y="110" width="1.2" height="2" fill="#4a4a4a"/><rect x="772.84" y="110" width="1.2" height="2" fill="#4a4a4a"/><rect x="779.76" y="110" width="1.2" height="2" fill="#4a4a4a"/><rect x="786.68" y="110" width="1.2" height="2" fill="#4a4a4a"/><rect x="793.50" y="106" width="1.3" height="6" fill="#2a2a2a"/><text x="794.20" y="104.8" text-anchor="middle" font-size="8.2" fill="#222" font-family="Liberation Sans" >1200</text><rect x="800.52" y="110" width="1.2" height="2" fill="#4a4a4a"/><rect x="807.44" y="110" width="1.2" height="2" fill="#4a4a4a"/><rect x="814.36" y="110" width="1.2" height="2" fill="#4a4a4a"/><rect x="821.28" y="110" width="1.2" height="2" fill="#4a4a4a"/><rect x="828.20" y="109" width="1.2" height="3" fill="#333"/><rect x="835.12" y="110" width="1.2" height="2" fill="#4a4a4a"/><rect x="842.04" y="110" width="1.2" height="2" fill="#4a4a4a"/><rect x="848.96" y="110" width="1.2" height="2" fill="#4a4a4a"/><rect x="855.88" y="110" width="1.2" height="2" fill="#4a4a4a"/><rect x="862.70" y="106" width="1.3" height="6" fill="#2a2a2a"/><text x="863.40" y="104.8" text-anchor="middle" font-size="8.2" fill="#222" font-family="Liberation Sans" >1400</text><rect x="869.72" y="110" width="1.2" height="2" fill="#4a4a4a"/><rect x="876.64" y="110" width="1.2" height="2" fill="#4a4a4a"/><rect x="883.56" y="110" width="1.2" height="2" fill="#4a4a4a"/><rect x="890.48" y="110" width="1.2" height="2" fill="#4a4a4a"/><rect x="897.40" y="109" width="1.2" height="3" fill="#333"/><rect x="904.32" y="110" width="1.2" height="2" fill="#4a4a4a"/><rect x="911.24" y="110" width="1.2" height="2" fill="#4a4a4a"/><rect x="918.16" y="110" width="1.2" height="2" fill="#4a4a4a"/><rect x="925.08" y="110" width="1.2" height="2" fill="#4a4a4a"/>
<path d="M28 104h2M32 104h1.6M35 104h1.6M30 102v1.4M30 106v1.4M30 109v1.4" stroke="#222" stroke-width="1"/><path d="M31.5 105.5L35 108.3" stroke="#222" stroke-width="1.1"/><path d="M37.2 110.6L33.2 109.6L36.2 106.6z" fill="#111"/>
</svg>
<svg style="left:23px;top:114px;overflow:hidden" width="18" height="546" viewBox="23 114 18 546">
<rect x="23" y="114" width="18" height="546" fill="#efefef"/><rect x="40" y="114" width="1" height="546" fill="#a8a8a8"/>
<rect x="35" y="114.33" width="4" height="1.3" fill="#2a2a2a"/><text transform="translate(34.6 115.03) rotate(-90)" text-anchor="middle" font-size="8.2" fill="#222" font-family="Liberation Sans">3200</text><rect x="37.2" y="121.37" width="1.8" height="1.2" fill="#555"/><rect x="37.2" y="128.30" width="1.8" height="1.2" fill="#555"/><rect x="37.2" y="135.24" width="1.8" height="1.2" fill="#555"/><rect x="37.2" y="142.18" width="1.8" height="1.2" fill="#555"/><rect x="36.5" y="149.12" width="2.5" height="1.2" fill="#444"/><rect x="37.2" y="156.05" width="1.8" height="1.2" fill="#555"/><rect x="37.2" y="162.99" width="1.8" height="1.2" fill="#555"/><rect x="37.2" y="169.93" width="1.8" height="1.2" fill="#555"/><rect x="37.2" y="176.86" width="1.8" height="1.2" fill="#555"/><rect x="35" y="183.70" width="4" height="1.3" fill="#2a2a2a"/><text transform="translate(34.6 184.40) rotate(-90)" text-anchor="middle" font-size="8.2" fill="#222" font-family="Liberation Sans">3000</text><rect x="37.2" y="190.74" width="1.8" height="1.2" fill="#555"/><rect x="37.2" y="197.67" width="1.8" height="1.2" fill="#555"/><rect x="37.2" y="204.61" width="1.8" height="1.2" fill="#555"/><rect x="37.2" y="211.55" width="1.8" height="1.2" fill="#555"/><rect x="36.5" y="218.49" width="2.5" height="1.2" fill="#444"/><rect x="37.2" y="225.42" width="1.8" height="1.2" fill="#555"/><rect x="37.2" y="232.36" width="1.8" height="1.2" fill="#555"/><rect x="37.2" y="239.30" width="1.8" height="1.2" fill="#555"/><rect x="37.2" y="246.23" width="1.8" height="1.2" fill="#555"/><rect x="35" y="253.07" width="4" height="1.3" fill="#2a2a2a"/><text transform="translate(34.6 253.77) rotate(-90)" text-anchor="middle" font-size="8.2" fill="#222" font-family="Liberation Sans">2800</text><rect x="37.2" y="260.11" width="1.8" height="1.2" fill="#555"/><rect x="37.2" y="267.04" width="1.8" height="1.2" fill="#555"/><rect x="37.2" y="273.98" width="1.8" height="1.2" fill="#555"/><rect x="37.2" y="280.92" width="1.8" height="1.2" fill="#555"/><rect x="36.5" y="287.86" width="2.5" height="1.2" fill="#444"/><rect x="37.2" y="294.79" width="1.8" height="1.2" fill="#555"/><rect x="37.2" y="301.73" width="1.8" height="1.2" fill="#555"/><rect x="37.2" y="308.67" width="1.8" height="1.2" fill="#555"/><rect x="37.2" y="315.60" width="1.8" height="1.2" fill="#555"/><rect x="35" y="322.44" width="4" height="1.3" fill="#2a2a2a"/><text transform="translate(34.6 323.14) rotate(-90)" text-anchor="middle" font-size="8.2" fill="#222" font-family="Liberation Sans">2600</text><rect x="37.2" y="329.48" width="1.8" height="1.2" fill="#555"/><rect x="37.2" y="336.41" width="1.8" height="1.2" fill="#555"/><rect x="37.2" y="343.35" width="1.8" height="1.2" fill="#555"/><rect x="37.2" y="350.29" width="1.8" height="1.2" fill="#555"/><rect x="36.5" y="357.23" width="2.5" height="1.2" fill="#444"/><rect x="37.2" y="364.16" width="1.8" height="1.2" fill="#555"/><rect x="37.2" y="371.10" width="1.8" height="1.2" fill="#555"/><rect x="37.2" y="378.04" width="1.8" height="1.2" fill="#555"/><rect x="37.2" y="384.97" width="1.8" height="1.2" fill="#555"/><rect x="35" y="391.81" width="4" height="1.3" fill="#2a2a2a"/><text transform="translate(34.6 392.51) rotate(-90)" text-anchor="middle" font-size="8.2" fill="#222" font-family="Liberation Sans">2400</text><rect x="37.2" y="398.85" width="1.8" height="1.2" fill="#555"/><rect x="37.2" y="405.78" width="1.8" height="1.2" fill="#555"/><rect x="37.2" y="412.72" width="1.8" height="1.2" fill="#555"/><rect x="37.2" y="419.66" width="1.8" height="1.2" fill="#555"/><rect x="36.5" y="426.60" width="2.5" height="1.2" fill="#444"/><rect x="37.2" y="433.53" width="1.8" height="1.2" fill="#555"/><rect x="37.2" y="440.47" width="1.8" height="1.2" fill="#555"/><rect x="37.2" y="447.41" width="1.8" height="1.2" fill="#555"/><rect x="37.2" y="454.34" width="1.8" height="1.2" fill="#555"/><rect x="35" y="461.18" width="4" height="1.3" fill="#2a2a2a"/><text transform="translate(34.6 461.88) rotate(-90)" text-anchor="middle" font-size="8.2" fill="#222" font-family="Liberation Sans">2200</text><rect x="37.2" y="468.22" width="1.8" height="1.2" fill="#555"/><rect x="37.2" y="475.15" width="1.8" height="1.2" fill="#555"/><rect x="37.2" y="482.09" width="1.8" height="1.2" fill="#555"/><rect x="37.2" y="489.03" width="1.8" height="1.2" fill="#555"/><rect x="36.5" y="495.97" width="2.5" height="1.2" fill="#444"/><rect x="37.2" y="502.90" width="1.8" height="1.2" fill="#555"/><rect x="37.2" y="509.84" width="1.8" height="1.2" fill="#555"/><rect x="37.2" y="516.78" width="1.8" height="1.2" fill="#555"/><rect x="37.2" y="523.71" width="1.8" height="1.2" fill="#555"/><rect x="35" y="530.55" width="4" height="1.3" fill="#2a2a2a"/><text transform="translate(34.6 531.25) rotate(-90)" text-anchor="middle" font-size="8.2" fill="#222" font-family="Liberation Sans">2000</text><rect x="37.2" y="537.59" width="1.8" height="1.2" fill="#555"/><rect x="37.2" y="544.52" width="1.8" height="1.2" fill="#555"/><rect x="37.2" y="551.46" width="1.8" height="1.2" fill="#555"/><rect x="37.2" y="558.40" width="1.8" height="1.2" fill="#555"/><rect x="36.5" y="565.34" width="2.5" height="1.2" fill="#444"/><rect x="37.2" y="572.27" width="1.8" height="1.2" fill="#555"/><rect x="37.2" y="579.21" width="1.8" height="1.2" fill="#555"/><rect x="37.2" y="586.15" width="1.8" height="1.2" fill="#555"/><rect x="37.2" y="593.08" width="1.8" height="1.2" fill="#555"/><rect x="35" y="599.92" width="4" height="1.3" fill="#2a2a2a"/><text transform="translate(34.6 600.62) rotate(-90)" text-anchor="middle" font-size="8.2" fill="#222" font-family="Liberation Sans">1800</text><rect x="37.2" y="606.96" width="1.8" height="1.2" fill="#555"/><rect x="37.2" y="613.89" width="1.8" height="1.2" fill="#555"/><rect x="37.2" y="620.83" width="1.8" height="1.2" fill="#555"/><rect x="37.2" y="627.77" width="1.8" height="1.2" fill="#555"/><rect x="36.5" y="634.71" width="2.5" height="1.2" fill="#444"/><rect x="37.2" y="641.64" width="1.8" height="1.2" fill="#555"/><rect x="37.2" y="648.58" width="1.8" height="1.2" fill="#555"/><rect x="37.2" y="655.52" width="1.8" height="1.2" fill="#555"/>
</svg>
<div class="a" id="vline"></div>
<div class="a" id="rect"></div>

<svg style="left:40px;top:330px" width="300" height="210" viewBox="40 330 300 210">
<defs>
<filter id="bl1" x="-50%" y="-50%" width="200%" height="200%"><feGaussianBlur stdDeviation="1.2"/></filter>
<filter id="bl2" x="-50%" y="-50%" width="200%" height="200%"><feGaussianBlur stdDeviation="3"/></filter>
<filter id="bl05" x="-50%" y="-50%" width="200%" height="200%"><feGaussianBlur stdDeviation="0.6"/></filter>
<linearGradient id="topg" x1="160" y1="362" x2="140" y2="434" gradientUnits="userSpaceOnUse">
<stop offset="0" stop-color="#ecdca6"/><stop offset="0.45" stop-color="#e8d496"/><stop offset="0.8" stop-color="#d4b878"/><stop offset="1" stop-color="#c4a262"/></linearGradient>
<radialGradient id="topr" cx="215" cy="395" r="70" gradientUnits="userSpaceOnUse">
<stop offset="0" stop-color="#f2e6b8" stop-opacity="0.9"/><stop offset="1" stop-color="#f2e6b8" stop-opacity="0"/></radialGradient>
<linearGradient id="baseL" x1="68" y1="440" x2="210" y2="490" gradientUnits="userSpaceOnUse">
<stop offset="0" stop-color="#a08650"/><stop offset="0.6" stop-color="#ae9258"/><stop offset="1" stop-color="#b89a60"/></linearGradient>
<linearGradient id="baseR" x1="210" y1="480" x2="272" y2="420" gradientUnits="userSpaceOnUse">
<stop offset="0" stop-color="#c8ab74"/><stop offset="1" stop-color="#d4bc8a"/></linearGradient>
<linearGradient id="bandR" x1="212" y1="470" x2="273" y2="400" gradientUnits="userSpaceOnUse">
<stop offset="0" stop-color="#34343f"/><stop offset="0.5" stop-color="#4a4a5c"/><stop offset="1" stop-color="#3a3a4c"/></linearGradient>
<linearGradient id="bandL" x1="68" y1="420" x2="212" y2="470" gradientUnits="userSpaceOnUse">
<stop offset="0" stop-color="#262631"/><stop offset="1" stop-color="#22222d"/></linearGradient>
<clipPath id="topclip"><path d="M144.5 358L272 391L212.5 455.5L67.5 413Z"/></clipPath>
</defs>
<ellipse cx="150" cy="495" rx="70" ry="10" fill="#000" opacity="0.015" filter="url(#bl2)"/>

<path d="M67.5 434.5L210.5 477L208.5 507.5L68 459.5Z" fill="url(#baseL)"/>
<path d="M210.5 477L273 411.5L270.5 452L208.5 507.5Z" fill="url(#baseR)"/>
<linearGradient id="baseV" x1="0" y1="0" x2="0" y2="1"><stop offset="0" stop-color="#000" stop-opacity="0"/><stop offset="1" stop-color="#3a2a08" stop-opacity="0.18"/></linearGradient><path d="M67.5 434.5L210.5 477L208.5 507.5L68 459.5Z" fill="url(#baseV)"/><path d="M68 459.5L208.5 507.5" stroke="#7a6238" stroke-width="1.2" opacity="0.7"/><path d="M67.5 435L210.5 477.5" stroke="#151520" stroke-width="1" opacity="0.5"/>
<path d="M209.5 478L209 507" stroke="#e0c898" stroke-width="1" opacity="0.6"/>
<path d="M67.5 413L212.5 455.5L210.5 477L67.5 434.5Z" fill="url(#bandL)"/>
<path d="M212.5 455.5L273.5 390L273 411.5L210.5 477Z" fill="url(#bandR)"/>
<path d="M126 451.5l3 4h10l2-2" stroke="#151520" stroke-width="1.6" fill="#1a1a24"/>
<path d="M144.5 356.5L273.5 390L212.5 455.5L67.5 413Z" fill="#2a2a36"/>
<g clip-path="url(#topclip)">
<rect x="60" y="350" width="220" height="110" fill="url(#topg)"/>
<rect x="60" y="350" width="220" height="110" fill="url(#topr)"/>
<g filter="url(#bl2)"><path d="M122 424Q165 430 214 452" stroke="#eef2ea" stroke-width="7" fill="none" opacity="0.7"/><path d="M268 392L215 452" stroke="#a88848" stroke-width="14" opacity="0.35"/></g>
<g filter="url(#bl1)">
<path d="M150 376Q170 378 193 386" stroke="#5a4030" stroke-width="1.3" fill="none" opacity="0.8"/>
<path d="M140 372Q132 380 128 392" stroke="#c09070" stroke-width="2" fill="none" opacity="0.4"/>
<ellipse cx="139" cy="367" rx="5" ry="4" fill="#b84430" opacity="0.85"/>
<ellipse cx="148" cy="372" rx="6" ry="4" fill="#c84a38" opacity="0.85"/>
<ellipse cx="155" cy="368" rx="4" ry="3" fill="#b85a40" opacity="0.8"/>
<ellipse cx="143" cy="377" rx="4" ry="3" fill="#a03a30" opacity="0.7"/>
<ellipse cx="162" cy="374" rx="3" ry="2" fill="#c06a50" opacity="0.6"/>
<ellipse cx="182" cy="382" rx="3" ry="1.8" fill="#c86a50" opacity="0.6"/>
<path d="M136 366L134 378" stroke="#4a3a30" stroke-width="1.2" opacity="0.7"/>
<ellipse cx="97" cy="408" rx="14" ry="8" fill="#6a3a30" opacity="0.8"/><ellipse cx="104" cy="404" rx="8" ry="4" fill="#4a2a28" opacity="0.8"/><path d="M86 404q11-7 24-1" stroke="#e8e0d8" stroke-width="2" fill="none" opacity="0.8"/><ellipse cx="95" cy="414" rx="6" ry="2" fill="#f0f0e8" opacity="0.8"/>
<ellipse cx="180" cy="440" rx="18" ry="6" fill="#c8e0cc" opacity="0.7"/>
<ellipse cx="192" cy="432" rx="7" ry="4" fill="#40b890" opacity="0.75"/>
<ellipse cx="200" cy="444" rx="6" ry="3.5" fill="#60c0a0" opacity="0.6"/>
<ellipse cx="205" cy="424" rx="6" ry="3.5" fill="#8a6a78" opacity="0.8"/>
<ellipse cx="222" cy="433" rx="4" ry="3" fill="#b080c0" opacity="0.6"/>
<ellipse cx="150" cy="406" rx="4" ry="2" fill="#d08060" opacity="0.6"/>
</g>

<g filter="url(#bl05)" stroke="#1e1a18" stroke-linecap="round" fill="none" opacity="0.92">
<path d="M178 392l11-2M176 395.5l14-2.5M183 388.5l1 7M179 398l9-1M181 396l-2 3M186 395l2 3" stroke-width="1.7"/>
<path d="M166 400l2 1M165 404l2 1M163 408l3-2M171 399l12-2M172 403l10-2M177 398l-1.5 9M170 406l11-1.5" stroke-width="1.7"/>
<path d="M156 410l15-3M163 406l-1 10M161 412l-7 5M165 411l8 5M158 415l11-2M160 407l3 2" stroke-width="1.8"/>
</g>
<g filter="url(#bl05)">
<path d="M169.5 431.5l4 4M173.5 431.5l-4 4" stroke="#111" stroke-width="1.3"/>
<path d="M193 392l6-2 1 5-6 2z" fill="#d8b040" opacity="0.7"/>
<path d="M158 393l-7 18" stroke="#a09070" stroke-width="3" opacity="0.35"/>
<path d="M133 419l36 5M135 423l32 4" stroke="#6a6450" stroke-width="1.6" opacity="0.45"/>
</g>
<path d="M68 413.5L212.5 455" stroke="#dcdad0" stroke-width="2.4" opacity="0.9"/>
<path d="M144.5 357.5L69 413" stroke="#2a2a34" stroke-width="1.2"/>
<path d="M144.5 357.5L273 390.5" stroke="#2a2a34" stroke-width="1.2"/>
</g>
<path d="M212.5 455.5L273.5 390" stroke="#22222e" stroke-width="1.5"/>
</svg>

<div class="h" style="left:168px;top:337px"></div>
<div class="h" style="left:312px;top:337px"></div>
<div class="h" style="left:312px;top:431px"></div>
<div class="h" style="left:168px;top:525px"></div>
<div class="h" style="left:312px;top:525px"></div>
<div class="ho" style="left:307px;top:345px"></div>
<div class="ho" style="left:307px;top:520px"></div>
</body></html>
